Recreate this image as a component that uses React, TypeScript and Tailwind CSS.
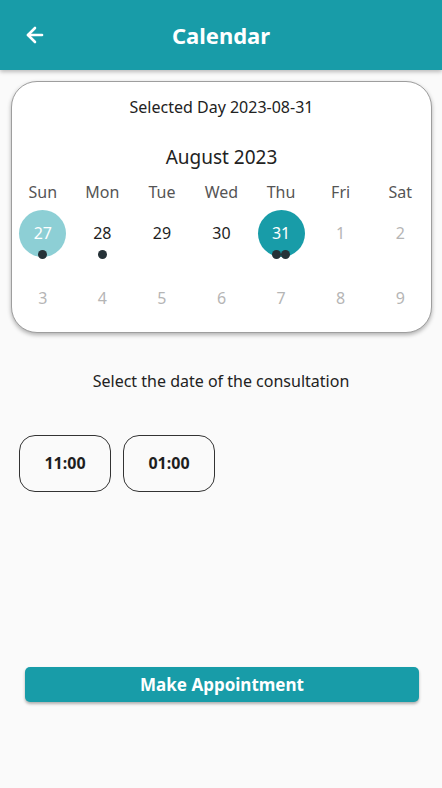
import { ArrowLeft } from 'lucide-react'

const weekDays = ['Sun', 'Mon', 'Tue', 'Wed', 'Thu', 'Fri', 'Sat']

type Day = { n: number; muted?: boolean; state?: 'today' | 'selected'; dots?: number }

const rows: Day[][] = [
  [
    { n: 27, state: 'today', dots: 1 },
    { n: 28, dots: 1 },
    { n: 29 },
    { n: 30 },
    { n: 31, state: 'selected', dots: 2 },
    { n: 1, muted: true },
    { n: 2, muted: true },
  ],
  [3, 4, 5, 6, 7, 8, 9].map((n) => ({ n, muted: true })),
]

function DayCell({ day }: { day: Day }) {
  let circle = ''
  let text = day.muted ? 'text-[#b5b5b5]' : 'text-[#1e1e1e]'
  if (day.state === 'today') {
    circle = 'bg-[#8dcfd5]'
    text = 'text-white'
  } else if (day.state === 'selected') {
    circle = 'bg-[#189ca8]'
    text = 'text-white'
  }
  return (
    <div className="flex h-[65px] items-center justify-center">
      <div className={`relative flex h-[47px] w-[47px] items-center justify-center rounded-full ${circle}`}>
        <span className={`text-[16px] ${text}`}>{day.n}</span>
        {day.dots ? (
          <div className="absolute bottom-[-2px] left-0 right-0 flex justify-center">
            {Array.from({ length: day.dots }).map((_, i) => (
              <span key={i} className="h-[9px] w-[9px] rounded-full bg-[#263238]" />
            ))}
          </div>
        ) : null}
      </div>
    </div>
  )
}

export default function App() {
  return (
    <div
      className="flex min-h-[788px] flex-col bg-[#fafafa]"
      style={{ fontFamily: '"Noto Sans", "Open Sans", sans-serif' }}
    >
      <header className="relative z-10 flex h-[70px] items-center bg-[#189ca8] px-[23px] shadow-[0_2px_4px_rgba(0,0,0,0.25)]">
        <ArrowLeft className="h-[24px] w-[24px] text-white" strokeWidth={2.6} />
        <h1 className="flex-1 pr-[24px] text-center text-[22px] font-bold text-white">Calendar</h1>
      </header>

      <section className="ml-[11px] mr-[10px] mt-[11px] rounded-[26px] border border-[#9e9e9e] bg-white px-[1px] shadow-[0_2px_4px_rgba(0,0,0,0.3)]">
        <p className="pt-[13px] text-center text-[16px] text-[#222]">Selected Day 2023-08-31</p>
        <p className="mt-[24px] text-center text-[19px] text-[#222]">August 2023</p>
        <div className="mt-[8px] grid grid-cols-7">
          {weekDays.map((d) => (
            <div key={d} className="text-center text-[16px] text-[#555]">
              {d}
            </div>
          ))}
        </div>
        <div className="-mt-[3px] pb-[1px]">
          {rows.map((row, i) => (
            <div key={i} className="grid grid-cols-7">
              {row.map((day) => (
                <DayCell key={`${i}-${day.n}`} day={day} />
              ))}
            </div>
          ))}
        </div>
      </section>

      <p className="mt-[36px] text-center text-[16px] text-[#222]">Select the date of the consultation</p>

      <div className="mt-[42px] flex gap-[12px] px-[19px]">
        {['11:00', '01:00'].map((t) => (
          <button
            key={t}
            className="flex h-[57px] w-[92px] items-center justify-center rounded-[16px] border-[1.5px] border-[#333] text-[16px] font-bold text-[#1e1e1e]"
          >
            {t}
          </button>
        ))}
      </div>

      <div className="mt-[175px] pl-[25px] pr-[23px]">
        <button className="flex h-[35px] w-full items-center justify-center rounded-[5px] bg-[#189ca8] pt-[2px] text-[17px] font-bold text-white shadow-[0_2px_3px_rgba(0,0,0,0.3)]">
          Make Appointment
        </button>
      </div>
    </div>
  )
}
